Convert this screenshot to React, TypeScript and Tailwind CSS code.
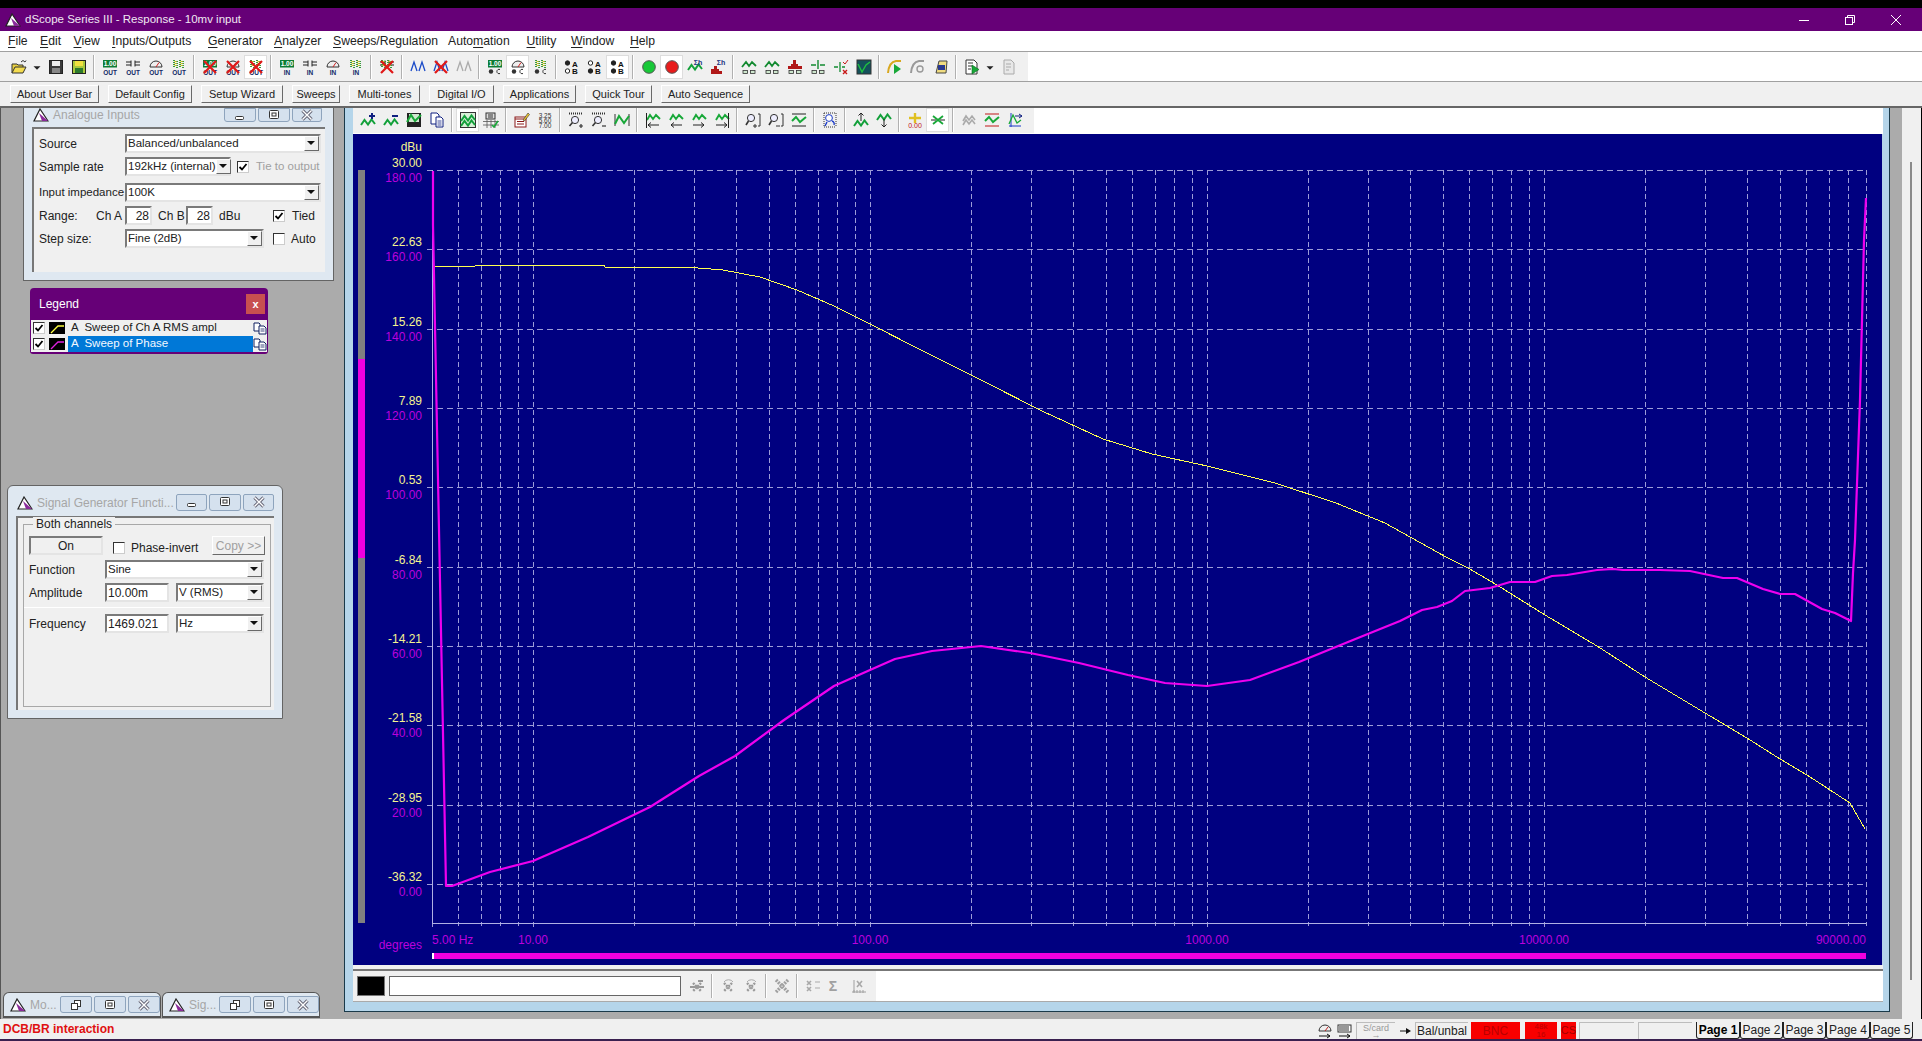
import React from "react";

const XF = (f: number) => 533 + 337 * Math.log10(f / 10);
const FREQS = [
  5, 6, 7, 8, 9, 10, 20, 30, 40, 50, 60, 70, 80, 90, 100, 200, 300, 400, 500, 600, 700, 800, 900, 1000, 2000, 3000,
  4000, 5000, 6000, 7000, 8000, 9000, 10000, 20000, 30000, 40000, 50000, 60000, 70000, 80000, 90000,
];
const DBU = ["30.00", "22.63", "15.26", "7.89", "0.53", "-6.84", "-14.21", "-21.58", "-28.95", "-36.32"];
const DEG = ["180.00", "160.00", "140.00", "120.00", "100.00", "80.00", "60.00", "40.00", "20.00", "0.00"];

const YELLOW =
  "435,266 475,266 476,265 604,265 605,267 686,267 723,270 760,277 797,290 834,306 870,324 919,349 981,380 1042,411 1103,439 1152,454 1207,466 1275,483 1336,503 1385,523 1446,557 1468,568 1497,585 1545,615 1597,646 1645,677 1705,713 1747,738 1780,759 1807,775 1850,803 1865,829";
const MAGENTA =
  "433,171 433,225 446,886 452,886 490,872 533,861 588,837 650,807 699,776 735,756 784,720 834,686 870,670 895,659 932,651 981,646 1030,653 1079,663 1128,675 1165,683 1207,686 1250,680 1299,662 1348,642 1400,621 1422,610 1437,607 1452,601 1465,591 1490,588 1510,582 1535,582 1552,576 1567,575 1597,570 1613,569 1623,570 1660,570 1690,571 1723,578 1737,578 1763,589 1780,594 1795,594 1822,609 1835,613 1851,621 1853,573 1855,540 1860,400 1864,240 1866,198";

const Logo = () => (
  <svg width="16" height="14" viewBox="0 0 16 14" className="shrink-0">
    <path d="M7 1 L1 13 H15 Z" fill="#fff" stroke="#222" strokeWidth="1.2" />
    <path d="M6 5 L15 13 H9 Z" fill="#8a2a9a" />
  </svg>
);

const wave = (c = "#12a03a") => <path d="M1 11 L4.5 6 L8 10.5 L11.5 5.5 L15 10" fill="none" stroke={c} strokeWidth="2" />;
const redX = <path d="M2 2 L14 14 M14 2 L2 14" stroke="#e01818" strokeWidth="2.2" />;
const grayX = <path d="M4 5 L12 13 M12 5 L4 13" stroke="#9a9a9a" strokeWidth="2.4" strokeDasharray="2 1" />;

function meterTop(kind: string) {
  if (kind === "num")
    return (
      <>
        <rect x="1" y="1" width="14" height="7.5" fill="#0c7c34" />
        <text x="8" y="7" textAnchor="middle" fill="#fff" className="text-[6.5px] font-bold">
          1.00
        </text>
      </>
    );
  if (kind === "filter") return <path d="M1 3h5M1 6h5M10 3h5M10 6h5M6 1.5v6M10 1.5v6" stroke="#222" fill="none" />;
  if (kind === "gauge")
    return (
      <>
        <path d="M2 8 A6 6 0 0 1 14 8 Z" fill="#eee" stroke="#333" />
        <path d="M8 8 L11 3.5" stroke="#d02020" />
      </>
    );
  return (
    <>
      <path d="M3 1v8M6 2v7M9 1v8M12 2v7" stroke="#3a9a3a" strokeWidth="2" strokeDasharray="1 1" />
      <path d="M4.5 2v6M10.5 2v6" stroke="#d8c820" strokeWidth="2" strokeDasharray="1 1" />
    </>
  );
}

const dots = (
  <>
    <circle cx="4" cy="12.5" r="2.2" fill="#333" />
    <path d="M13 10.5 A2.2 2.2 0 1 0 13 14.5" fill="none" stroke="#333" />
  </>
);

function abGlyph(a: boolean, b: boolean) {
  return (
    <>
      <circle cx="3.5" cy="4" r="2.2" fill={a ? "#222" : "#fff"} stroke="#222" />
      <circle cx="3.5" cy="12" r="2.2" fill={b ? "#222" : "#fff"} stroke="#222" />
      <text x="11" y="7.5" textAnchor="middle" fill="#111" className="text-[8px] font-bold">
        A
      </text>
      <text x="11" y="15" textAnchor="middle" fill="#111" className="text-[8px] font-bold">
        B
      </text>
    </>
  );
}

const boxes = (
  <>
    <rect x="2" y="11.5" width="4.5" height="3" fill="#cfe8cf" stroke="#333" strokeWidth=".8" />
    <rect x="9.5" y="11.5" width="4.5" height="3" fill="#cfe8cf" stroke="#333" strokeWidth=".8" />
  </>
);

const zoomLens = (
  <>
    <path d="M1 1.5h14" stroke="#333" strokeDasharray="1 1" strokeWidth="2" />
    <circle cx="7" cy="8" r="3.6" fill="#eef" stroke="#333" />
    <path d="M4.5 10.5 L1.5 14" stroke="#333" strokeWidth="1.6" />
  </>
);

const grayDoc = (
  <>
    <path d="M3 1h7l3 3v11H3z" fill="#e8e8e8" stroke="#aaa" />
    <path d="M5 5h5M5 8h5M5 11h3" stroke="#aaa" />
  </>
);

function glyph(k: string) {
  const [a, b] = k.split("-");
  switch (a) {
    case "open":
      return (
        <>
          <path d="M1 14V5h5l1 1h5v3" fill="#e8d040" stroke="#333" />
          <path d="M1 14 L4 8 H15 L12 14 Z" fill="#f4dc50" stroke="#333" />
          <path d="M10 3 Q12 0 14 3 L15 1.5" fill="none" stroke="#333" />
        </>
      );
    case "drop":
      return <path d="M4 7 H12 L8 11 Z" fill="#222" />;
    case "save":
      return (
        <>
          <rect x="1.5" y="1.5" width="13" height="13" fill={b ? "#a8c83c" : "#3a3a3a"} stroke="#222" />
          <rect x="4" y="2" width="8" height="5" fill={b ? "#f0e040" : "#eee"} />
          <rect x="4" y="9" width="8" height="5" fill={b ? "#2c7a2c" : "#888"} />
        </>
      );
    case "out":
    case "xout":
      return (
        <>
          {meterTop(b)}
          <text x="8" y="15.5" textAnchor="middle" fill="#102a66" className="text-[6.5px] font-bold">
            OUT
          </text>
          {a === "xout" && redX}
        </>
      );
    case "in":
      return (
        <>
          {meterTop(b)}
          <text x="8" y="15.5" textAnchor="middle" fill="#102a66" className="text-[6.5px] font-bold">
            IN
          </text>
        </>
      );
    case "cs":
      return (
        <>
          {meterTop(b)}
          {dots}
        </>
      );
    case "x":
      return (
        <>
          {meterTop("filter")}
          {meterTop("multi")}
          {redX}
        </>
      );
    case "blue":
      return (
        <>
          <path d="M1 12 L4 3 L7 12 M9 12 L12 3 L15 12" fill="none" stroke={b === "gray" ? "#aaa" : "#1a4ac8"} strokeWidth="1.3" />
          {b === "x" && redX}
        </>
      );
    case "ab":
      return abGlyph(b[0] === "1", b[1] === "1");
    case "led":
      return <circle cx="8" cy="8" r="6.3" fill={b === "g" ? "#18c838" : "#e81c1c"} stroke="#555" />;
    case "sig":
      return (
        <>
          {b === "w" ? wave() : <path d="M1 15V10h3V7h3v3h2v2h3v3z" fill="#b01818" />}
          <text x="11" y="6" textAnchor="middle" fill="#203080" className="text-[7px] font-bold">
            Σh
          </text>
        </>
      );
    case "wb":
      return (
        <>
          {b === "w" && <path d="M1 8 L5 3 L8 7 L11 3 L15 7" fill="none" stroke="#128a30" strokeWidth="1.8" />}
          {b === "r" && <path d="M1 10V7h3V5h2V1h3v4h2v2h4v3z" fill="#b01818" />}
          {b === "i" && <path d="M1 6h5M8 1v9M10 6h5" stroke="#128a30" strokeWidth="1.4" />}
          {boxes}
        </>
      );
    case "chk":
      return (
        <>
          <path d="M1 8h4M7 3v10M9 8h3" stroke="#128a30" strokeWidth="1.3" />
          <path d="M10 3l2 2 3-4" stroke="#c81818" fill="none" />
          <path d="M10 11l4 4M14 11l-4 4" stroke="#c81818" strokeWidth="1.4" />
        </>
      );
    case "scr":
      return (
        <>
          <rect x="1" y="1" width="14" height="14" fill="#14505a" stroke="#333" />
          <path d="M2 5 L6 13 L10 6 L14 3" fill="none" stroke="#20c040" strokeWidth="1.4" />
        </>
      );
    case "curve":
      return (
        <>
          <path d="M1 14 Q2 3 9 2 H14" fill="none" stroke={b === "g" ? "#999" : "#d8a820"} strokeWidth="2" />
          {b === "g" ? (
            <circle cx="10" cy="10" r="3" fill="none" stroke="#999" strokeWidth="1.4" />
          ) : (
            <path d="M7 5 L14 10 L7 15 Z" fill="#18a838" />
          )}
        </>
      );
    case "note":
      return (
        <>
          <path d="M3 14 L6 2 H14 L13 14 Z" fill="#f0dc80" stroke="#444" />
          <rect x="5" y="6" width="7" height="5" fill="#2a3a90" />
        </>
      );
    case "doc":
      return (
        <>
          <path d="M2 1h8l3 3v11H2z" fill="#fff" stroke="#333" />
          <path d="M4 4h5M4 7h4M4 10h3" stroke="#333" />
          <path d="M8 6 L15 10.5 L8 15 Z" fill="#18a838" stroke="#0a6a20" strokeWidth=".6" />
        </>
      );
    case "gdoc":
      return grayDoc;
    case "plus":
    case "minus":
      return (
        <>
          <g transform="translate(0 2)">{wave()}</g>
          <path d={a === "plus" ? "M9 4h6M12 1v6" : "M9 4h6"} stroke="#102080" strokeWidth="2" />
        </>
      );
    case "savec":
      return (
        <>
          <rect x="1" y="1" width="14" height="14" fill="#222" />
          <rect x="3" y="2" width="10" height="8" fill="#cfe8cf" />
          <path d="M1 10 L5 3 L9 9 L15 3" fill="none" stroke="#18a838" strokeWidth="2" />
        </>
      );
    case "copy":
      return (
        <>
          <path d="M2 1h6l2 2v9H2z" fill="#fff" stroke="#102080" />
          <path d="M7 5h5l2 2v8H7z" fill="#fff" stroke="#102080" />
          <path d="M8.5 9h4M8.5 11h4M8.5 13h4" stroke="#102080" strokeWidth=".8" />
        </>
      );
    case "chart":
      return (
        <>
          <rect x="0.5" y="0.5" width="15" height="15" fill="#d8f0d8" stroke="#333" />
          <g transform="translate(0 -2)">{wave()}</g>
          <g transform="translate(0 3)">{wave()}</g>
        </>
      );
    case "print":
      return (
        <>
          <rect x="3" y="1" width="9" height="6" fill="#ddd" stroke="#333" />
          <path d="M5 3h5M5 5h5" stroke="#333" />
          <path d="M0 9.5h16M0 13h16M4 8v8M8 8v8M12 8v8" stroke="#555" strokeWidth=".8" />
          <path d="M9 13 L11 15 L15 9" stroke="#18a838" fill="none" strokeWidth="1.6" />
        </>
      );
    case "cal":
      return (
        <>
          <rect x="1" y="5" width="11" height="10" fill="#fff" stroke="#8a1818" />
          <path d="M1 7h11M3 9.5h7M3 12h7" stroke="#8a1818" />
          <path d="M9 8 L14 1 L15.5 2.5 L10.5 9 Z" fill="#e8c030" stroke="#333" strokeWidth=".6" />
        </>
      );
    case "nums":
      return (
        <text x="8" y="6" textAnchor="middle" fill="#333" className="text-[6.5px]">
          <tspan x="8">3.25</tspan>
          <tspan x="8" dy="5">5.60</tspan>
          <tspan x="8" dy="5">7.00</tspan>
        </text>
      );
    case "zp":
    case "zm":
      return (
        <>
          {zoomLens}
          <path d={a === "zp" ? "M11 14h4M13 12v4" : "M11 14h4"} stroke="#333" strokeWidth="1.2" />
        </>
      );
    case "gbar":
      return (
        <>
          <path d="M1 2v12M15 2v12" stroke="#333" />
          <path d="M1 12 L5 4 L10 11 L15 4" fill="none" stroke="#18a838" strokeWidth="2" />
        </>
      );
    case "wl":
    case "wr":
      return (
        <>
          <path d="M2 8 L5 3 L8 7 L11 3 L15 7" fill="none" stroke="#18a838" strokeWidth="1.9" />
          <path d={a === "wl" ? "M14 13H3M6 10.5 L3 13 L6 15.5" : "M2 13H13M10 10.5 L13 13 L10 15.5"} fill="none" stroke="#222" />
          {b === "e" && <path d={a === "wl" ? "M1.5 1v15" : "M14.5 1v15"} stroke="#222" />}
        </>
      );
    case "zx":
      return (
        <>
          <circle cx="6" cy="6" r="3.6" fill="#eef" stroke="#333" />
          <path d="M3.5 9 L1 13" stroke="#333" strokeWidth="1.6" />
          <path d={b === "p" ? "M8 14h4M10 12v4" : "M8 14h4"} stroke="#333" />
          <path d="M13 2h2v12h-2" fill="none" stroke="#333" />
        </>
      );
    case "wbar":
      return (
        <>
          <path d="M1 2h14M1 14h14" stroke="#222" />
          <path d="M1 9 L5 5 L9 10 L15 5" fill="none" stroke="#18a838" strokeWidth="2" />
        </>
      );
    case "zr":
      return (
        <>
          <path d="M2 1h12M2 15h12M2 1v14M14 1v14" stroke="#333" strokeDasharray="1 1" />
          <circle cx="7" cy="6" r="3.4" fill="#fff" stroke="#1a3ac8" />
          <path d="M5 10 L3 14 M10 9 A3 3 0 0 1 12 13" stroke="#1a3ac8" fill="none" strokeWidth="1.4" />
        </>
      );
    case "up":
    case "dn":
      return (
        <>
          <g transform={a === "up" ? "translate(0 3)" : "translate(0 -3)"}>{wave()}</g>
          <path d={a === "up" ? "M8 9V1M5.5 3.5 L8 1 L10.5 3.5" : "M8 7V15M5.5 12.5 L8 15 L10.5 12.5"} fill="none" stroke="#222" />
        </>
      );
    case "cross":
      return (
        <>
          <path d="M8 1v10M2 6h12" stroke="#e0c020" strokeWidth="2.4" />
          <text x="8" y="15.5" textAnchor="middle" fill="#c01818" className="text-[7px]">
            0.00
          </text>
        </>
      );
    case "xarr":
      return (
        <>
          <path d="M3 4 L13 12 M13 4 L3 12" stroke="#18a838" strokeWidth="1.8" />
          <path d="M1 8h5M15 8h-5" stroke="#222" strokeWidth="1.2" />
        </>
      );
    case "gw":
      return <path d="M2 9 L5 4 L8 8 L11 4 L14 8 M2 13 L5 8 L8 12 L11 8 L14 12" fill="none" stroke="#aaa" strokeWidth="1.6" />;
    case "rw":
      return (
        <>
          <path d="M1 2h14M1 14h14" stroke="#c01818" />
          <path d="M1 9 L5 5 L9 10 L15 5" fill="none" stroke="#18a838" strokeWidth="2" />
        </>
      );
    case "bc":
      return (
        <>
          <path d="M4 1v14M2 14h12" stroke="#1a3ac8" />
          <path d="M2 12 L6 3 L10 11 L14 8" stroke="#18a838" fill="none" strokeWidth="1.3" />
          <path d="M8 4h7M12 2 L15 4 L12 6" stroke="#102080" fill="none" />
        </>
      );
    case "g1":
      return (
        <>
          <path d="M9 3h5" stroke="#999" strokeWidth="2" />
          <path d="M1 9h14" stroke="#999" strokeWidth="2" />
          {grayX}
        </>
      );
    case "g2":
      return (
        <>
          <path d="M4 4 A5 4 0 0 1 13 4" fill="none" stroke="#aaa" />
          {grayX}
        </>
      );
    case "g3":
      return <path d="M2 2 L14 14 M14 2 L2 14" stroke="#a0a0a0" strokeWidth="3.4" strokeDasharray="2 1" />;
    case "g4":
      return (
        <>
          <path d="M2 3 L6 7 M6 3 L2 7 M2 9 L6 13 M6 9 L2 13" stroke="#a8a8a8" strokeWidth="1.6" />
          <path d="M10 4h5M10 10h5" stroke="#aaa" />
        </>
      );
    case "g5":
      return (
        <text x="5" y="13" textAnchor="middle" fill="#a0a0a0" className="text-[14px] font-bold">
          Σ
        </text>
      );
    case "g6":
      return (
        <>
          <path d="M1 14h14M3 12v3M6 12v3M9 12v3M12 12v3M3 2v12" stroke="#a0a0a0" />
          <path d="M6 3 L11 9 M11 3 L6 9" stroke="#a8a8a8" strokeWidth="1.6" />
        </>
      );
  }
  return null;
}

function Tool({ k, on, wide = "w-[23px]" }: { k: string; on?: boolean; wide?: string }) {
  return (
    <div className={`${wide} h-[24px] shrink-0 flex items-center justify-center ${on ? "bg-white border border-[#dddddd]" : ""}`}>
      <svg width="16" height="16" viewBox="0 0 16 16" className="font-['Liberation_Sans',sans-serif]">
        {glyph(k)}
      </svg>
    </div>
  );
}

const Sep = () => (
  <div className="w-[8px] h-[24px] shrink-0 flex justify-center">
    <div className="w-[2px] h-full border-l border-[#b0b0b0] border-r-white border-r" />
  </div>
);

function Strip({ items }: { items: string[] }) {
  return (
    <>
      {items.map((s, i) => {
        if (s === "|") return <Sep key={i} />;
        const on = s.endsWith("*");
        const k = on ? s.slice(0, -1) : s;
        return <Tool key={i} k={k} on={on} wide={k === "drop" ? "w-[14px]" : "w-[23px]"} />;
      })}
    </>
  );
}

const MAIN_TOOLS = [
  "open", "drop", "save", "save-a", "|",
  "out-num", "out-filter", "out-gauge", "out-multi", "|",
  "xout-num", "xout-gauge", "xout-multi*", "|",
  "in-num", "in-filter", "in-gauge", "in-multi", "|",
  "x", "|",
  "blue", "blue-x", "blue-gray", "|",
  "cs-num", "cs-gauge*", "cs-multi", "|",
  "ab-10", "ab-01", "ab-11*", "|",
  "led-g", "led-r*", "sig-w", "sig-r", "|",
  "wb-w", "wb-w", "wb-r", "wb-i", "chk", "scr", "|",
  "curve", "curve-g", "note", "|",
  "doc", "drop", "gdoc",
];

const PLOT_TOOLS = [
  "plus", "minus", "savec", "copy", "|",
  "chart*", "print", "|",
  "cal", "nums", "|",
  "zp", "zm", "gbar", "|",
  "wl-e", "wl", "wr", "wr-e", "|",
  "zx-p", "zx-m", "wbar", "|",
  "zr", "|",
  "up", "dn", "|",
  "cross", "xarr*", "|",
  "gw", "rw", "bc",
];

const MENUS: [string, string, string, string][] = [
  ["", "F", "ile", "w-[32px]"],
  ["", "E", "dit", "w-[33.5px]"],
  ["", "V", "iew", "w-[38.5px]"],
  ["", "I", "nputs/Outputs", "w-[96px]"],
  ["", "G", "enerator", "w-[66px]"],
  ["", "A", "nalyzer", "w-[59px]"],
  ["", "S", "weeps/Regulation", "w-[115px]"],
  ["Auto", "m", "ation", "w-[78.5px]"],
  ["", "U", "tility", "w-[44.5px]"],
  ["", "W", "indow", "w-[59px]"],
  ["", "H", "elp", "w-[40px]"],
];

const BTNS: [string, string][] = [
  ["About User Bar", "w-[98px]"],
  ["Default Config", "w-[93px]"],
  ["Setup Wizard", "w-[91px]"],
  ["Sweeps", "w-[57px]"],
  ["Multi-tones", "w-[80px]"],
  ["Digital I/O", "w-[74px]"],
  ["Applications", "w-[82px]"],
  ["Quick Tour", "w-[76px]"],
  ["Auto Sequence", "w-[98px]"],
];

const bevel = "border border-t-white border-l-white border-r-[#696969] border-b-[#696969]";
const sunken = "border-2 border-t-[#7a7a7a] border-l-[#7a7a7a] border-r-[#e4e4e4] border-b-[#e4e4e4] bg-white";

function Check({ on }: { on?: boolean }) {
  return (
    <div className="w-[12px] h-[12px] shrink-0 bg-white border border-t-[#333] border-l-[#333] border-r-[#ccc] border-b-[#ccc] flex items-center justify-center">
      {on && (
        <svg width="10" height="10" viewBox="0 0 10 10">
          <path d="M1.5 5 L4 7.5 L8.5 2" fill="none" stroke="#000" strokeWidth="1.8" />
        </svg>
      )}
    </div>
  );
}

function Select({ value, cls }: { value: string; cls: string }) {
  return (
    <div className={`${cls} ${sunken} h-[19px] shrink-0 flex items-center justify-between`}>
      <span className="pl-[1px] text-[#222] text-[11.5px] leading-none whitespace-nowrap">{value}</span>
      <div className={`w-[15px] h-[15px] shrink-0 bg-[#f0f0f0] ${bevel} flex items-center justify-center`}>
        <svg width="9" height="5" viewBox="0 0 9 5">
          <path d="M0 0h8L4 4z" fill="#111" />
        </svg>
      </div>
    </div>
  );
}

function Input({ value, cls, right }: { value: string; cls: string; right?: boolean }) {
  return (
    <div className={`${cls} ${sunken} h-[19px] shrink-0 flex items-center ${right ? "justify-end pr-[1px]" : "pl-[1px]"} text-[#222] leading-none`}>
      {value}
    </div>
  );
}

function WinBtn({ kind, cls }: { kind: string; cls: string }) {
  return (
    <div className={`${cls} shrink-0 rounded-b-[3px] border border-[#8ea4bd] bg-[#d5e1ee] flex items-center justify-center`}>
      <svg width="16" height="12" viewBox="0 0 16 12">
        {kind === "min" && <rect x="3.5" y="7.5" width="8" height="3" rx="1" fill="#fff" stroke="#333" />}
        {kind === "max" && (
          <>
            <rect x="3.5" y="1.5" width="9" height="8" rx="1" fill="#fff" stroke="#333" />
            <rect x="6" y="4" width="4" height="3" fill="#fff" stroke="#333" />
          </>
        )}
        {kind === "res" && (
          <>
            <rect x="6.5" y="1.5" width="6" height="6" fill="#fff" stroke="#333" />
            <rect x="3.5" y="4.5" width="6" height="6" fill="#fff" stroke="#333" />
          </>
        )}
        {kind === "x" && (
          <>
            <path d="M3.5 1.5 L12.5 10.5 M12.5 1.5 L3.5 10.5" stroke="#667" strokeWidth="3.2" />
            <path d="M3.5 1.5 L12.5 10.5 M12.5 1.5 L3.5 10.5" stroke="#fff" strokeWidth="1.4" />
          </>
        )}
      </svg>
    </div>
  );
}

function AnalogueInputs() {
  return (
    <div className="absolute left-[22px] top-0 w-[311px] h-[173px] bg-[#dfe8f1] border-x border-b border-[#646464] px-[8px] flex flex-col">
      <div className="h-[19px] shrink-0 flex items-start">
        <div className="pr-[4px] pl-[1px]"><Logo /></div>
        <span className="text-[#a6a6a6] text-[12px] leading-[14px] flex-1">Analogue Inputs</span>
        <div className="flex gap-[2px] pr-[3px]">
          <WinBtn kind="min" cls="w-[32px] h-[14px]" />
          <WinBtn kind="max" cls="w-[32px] h-[14px]" />
          <WinBtn kind="x" cls="w-[30px] h-[14px]" />
        </div>
      </div>
      <div className="h-[145px] bg-[#f0f0f0] border-t-2 border-l-2 border-[#777777] pl-[5px] pt-[5px] flex flex-col">
        <div className="flex items-center h-[19px]">
          <span className="w-[86px]">Source</span>
          <Select value="Balanced/unbalanced" cls="w-[196px]" />
        </div>
        <div className="flex items-center h-[19px] mt-[4px]">
          <span className="w-[86px]">Sample rate</span>
          <Select value="192kHz (internal)" cls="w-[106px]" />
          <div className="ml-[6px]"><Check on /></div>
          <span className="ml-[7px] text-[#a0a0a0] text-[11.5px] whitespace-nowrap">Tie to output</span>
        </div>
        <div className="flex items-center h-[19px] mt-[7px]">
          <span className="w-[86px] whitespace-nowrap text-[11.5px]">Input impedance</span>
          <Select value="100K" cls="w-[196px]" />
        </div>
        <div className="flex items-center h-[19px] mt-[4px]">
          <span className="w-[57px]">Range:</span>
          <span className="w-[29px]">Ch A</span>
          <Input value="28" cls="w-[27px]" right />
          <span className="w-[34px] pl-[6px] whitespace-nowrap">Ch B</span>
          <Input value="28" cls="w-[27px]" right />
          <span className="w-[60px] pl-[6px]">dBu</span>
          <Check on />
          <span className="ml-[7px]">Tied</span>
        </div>
        <div className="flex items-center h-[19px] mt-[4px]">
          <span className="w-[86px]">Step size:</span>
          <Select value="Fine (2dB)" cls="w-[139px]" />
          <div className="ml-[9px]"><Check /></div>
          <span className="ml-[6px]">Auto</span>
        </div>
      </div>
    </div>
  );
}

function LegendRow({ label, color, selected }: { label: string; color: string; selected?: boolean }) {
  return (
    <div className="h-[16px] flex items-center bg-[#f0f0f0]">
      <div className="ml-[2px]"><Check on /></div>
      <svg width="16" height="12" viewBox="0 0 16 12" className="ml-[4px] shrink-0">
        <rect width="16" height="12" fill="#000" />
        <path d="M2 11 L9 4 H15" fill="none" stroke={color} strokeWidth="1.3" />
      </svg>
      <div className={`ml-[3px] flex-1 h-full flex items-center pl-[3px] text-[11.5px] ${selected ? "bg-[#0078d7] text-[#f4f8ff]" : "text-[#222]"}`}>
        <span className="whitespace-pre">{label}</span>
      </div>
      <svg width="14" height="13" viewBox="0 0 14 13" className="shrink-0">
        <path d="M1 1h5l1 1v7H1z" fill="#fff" stroke="#102060" />
        <path d="M6 4h5l2 2v6H6z" fill="#fff" stroke="#102060" />
        <path d="M7.5 7h4M7.5 9h4" stroke="#102060" strokeWidth=".8" />
      </svg>
    </div>
  );
}

function LegendBox() {
  return (
    <div className="absolute left-[29px] top-[180px] w-[238px] h-[66px] bg-[#660077] rounded-t-[4px] rounded-b-[3px] px-[1px] pb-[1px] flex flex-col">
      <div className="h-[32px] flex items-center justify-between pl-[8px] pr-[2px]">
        <span className="text-white text-[12px]">Legend</span>
        <div className="w-[19px] h-[20px] bg-[#c75050] flex items-center justify-center text-white text-[11px] font-bold leading-none">x</div>
      </div>
      <LegendRow label="A  Sweep of Ch A RMS ampl" color="#ffff40" />
      <LegendRow label="A  Sweep of Phase" color="#e020e0" selected />
    </div>
  );
}

function SignalGen() {
  return (
    <div className="absolute left-[6px] top-[377px] w-[276px] h-[234px] rounded-t-[6px] bg-[#dfe8f1] border-x border-b border-t border-[#646464] px-[8px] flex flex-col">
      <div className="h-[30px] shrink-0 flex items-center">
        <div className="pl-[1px] pr-[4px] pt-[3px]"><Logo /></div>
        <span className="text-[#a6a6a6] text-[12px] pt-[3px] flex-1 whitespace-nowrap">Signal Generator Functi...</span>
        <div className="flex gap-[2px] pt-[2px]">
          <WinBtn kind="min" cls="w-[31px] h-[17px] rounded-t-[2px]" />
          <WinBtn kind="max" cls="w-[32px] h-[17px] rounded-t-[2px]" />
          <WinBtn kind="x" cls="w-[31px] h-[17px] rounded-t-[2px]" />
        </div>
      </div>
      <div className="h-[194px] bg-[#f0f0f0] border-t-2 border-l-2 border-[#777777] pl-[5px] pt-[6px] pr-[3px]">
        <div className="relative h-[183px] border border-[#a8a8a8] px-[5px] pt-[11px]">
          <span className="absolute left-[9px] top-[-8px] bg-[#f0f0f0] px-[3px] leading-[14px]">Both channels</span>
          <div className="flex items-center h-[19px]">
            <div className="w-[74px] h-[19px] border-2 border-t-[#7a7a7a] border-l-[#7a7a7a] border-r-[#e4e4e4] border-b-[#e4e4e4] flex items-center justify-center">On</div>
            <div className="ml-[10px] mt-[4px]"><Check /></div>
            <span className="ml-[6px] mt-[4px] w-[81px]">Phase-invert</span>
            <div className={`w-[53px] h-[19px] ${bevel} text-[#a0a0a0] flex items-center justify-center`}>Copy &gt;&gt;</div>
          </div>
          <div className="flex items-center h-[19px] mt-[5px]">
            <span className="w-[76px] whitespace-nowrap">Function</span>
            <Select value="Sine" cls="w-[159px]" />
          </div>
          <div className="flex items-center h-[19px] mt-[4px]">
            <span className="w-[76px]">Amplitude</span>
            <Input value="10.00m" cls="w-[64px]" />
            <div className="ml-[7px]"><Select value="V (RMS)" cls="w-[88px]" /></div>
          </div>
          <div className="h-px bg-[#a8a8a8] -mx-[5px] mt-[5px] mb-[6px] border-b border-white" />
          <div className="flex items-center h-[19px]">
            <span className="w-[76px]">Frequency</span>
            <Input value="1469.021" cls="w-[64px]" />
            <div className="ml-[7px]"><Select value="Hz" cls="w-[88px]" /></div>
          </div>
        </div>
      </div>
    </div>
  );
}

function MiniWin({ label, cls }: { label: string; cls: string }) {
  return (
    <div className={`absolute ${cls} bottom-[1px] w-[158px] h-[26px] rounded-t-[6px] bg-[#dfe8f1] border border-b-2 border-[#555555] flex items-center pl-[6px] gap-[2px]`}>
      <Logo />
      <span className="text-[#a6a6a6] w-[31px] ml-[2px]">{label}</span>
      <WinBtn kind="res" cls="w-[32px] h-[17px] rounded-t-[2px]" />
      <WinBtn kind="max" cls="w-[32px] h-[17px] rounded-t-[2px]" />
      <WinBtn kind="x" cls="w-[32px] h-[17px] rounded-t-[2px]" />
    </div>
  );
}

function Chart() {
  const rows = DBU.map((_, i) => 170 + i * 79.33);
  const grid = "#9c9cd8";
  return (
    <svg width="1529" height="831" viewBox="353 134 1529 831" className="block shrink-0 bg-[#000080] text-[12px] font-['Liberation_Sans',sans-serif]">
      <rect x="358" y="170" width="7" height="753" fill="#808080" />
      <rect x="358" y="359" width="7" height="199" fill="#f000e0" />
      {FREQS.map((f) => (
        <line key={f} x1={Math.round(XF(f)) + 0.5} x2={Math.round(XF(f)) + 0.5} y1="170" y2={f === 5 || f === 10 || f === 100 || f === 1000 || f === 10000 ? 930 : 926} stroke={grid} strokeDasharray="5 3" />
      ))}
      {rows.map((y, i) => (
        <g key={i}>
          <line x1="427" x2="1866" y1={Math.round(y) + 0.5} y2={Math.round(y) + 0.5} stroke={grid} strokeDasharray="6 4" />
          <text x="422" y={y - 3} textAnchor="end" fill="#f4f490">
            {DBU[i]}
          </text>
          <text x="422" y={y + 12} textAnchor="end" fill="#bb00dd">
            {DEG[i]}
          </text>
        </g>
      ))}
      <text x="422" y="151" textAnchor="end" fill="#f4f490">dBu</text>
      <line x1="432.5" x2="432.5" y1="170" y2="923" stroke="#b0b0e4" />
      <line x1="432" x2="1866" y1="923.5" y2="923.5" stroke="#b0b0e4" />
      <polyline points={YELLOW} fill="none" stroke="#ffff50" strokeWidth="1" shapeRendering="crispEdges" />
      <polyline points={MAGENTA} fill="none" stroke="#ee00ee" strokeWidth="2.2" strokeLinejoin="round" />
      <text x="432" y="944" fill="#bb00dd">5.00 Hz</text>
      <text x="533" y="944" textAnchor="middle" fill="#bb00dd">10.00</text>
      <text x="870" y="944" textAnchor="middle" fill="#bb00dd">100.00</text>
      <text x="1207" y="944" textAnchor="middle" fill="#bb00dd">1000.00</text>
      <text x="1544" y="944" textAnchor="middle" fill="#bb00dd">10000.00</text>
      <text x="1866" y="944" textAnchor="end" fill="#bb00dd">90000.00</text>
      <text x="422" y="949" textAnchor="end" fill="#bb00dd">degrees</text>
      <rect x="432" y="953" width="1434" height="6" fill="#f000e0" />
      <rect x="432" y="953" width="2" height="6" fill="#ffffff" />
    </svg>
  );
}

function PlotWindow() {
  return (
    <div className="w-[1546px] h-[904px] shrink-0 bg-[#b5d5ea] border-x border-b border-[#1a3a4a] pl-[8px] pr-[6px] flex flex-col">
      <div className="h-[26px] bg-white shrink-0 flex">
        <div className="w-[681px] h-[25px] bg-[#f0f0f0] flex items-start pl-[3px]">
          <Strip items={PLOT_TOOLS} />
        </div>
      </div>
      <Chart />
      <div className="h-[6px] shrink-0 bg-[#f0f0f0] border-b-2 border-[#777777]" />
      <div className="h-[31px] shrink-0 bg-white border-b border-[#aaaaaa] flex">
        <div className="w-[523px] bg-[#f0f0f0] flex items-center pl-[4px]">
          <div className="w-[28px] h-[20px] bg-black border border-[#777777]" />
          <div className="w-[292px] h-[20px] ml-[4px] bg-white border border-[#666666]" />
          <div className="ml-[4px] flex items-center">
            <Tool k="g1" wide="w-[23px]" />
            <Sep />
            <Tool k="g2" />
            <Tool k="g2" />
            <Sep />
            <Tool k="g3" />
            <Sep />
            <Tool k="g4" />
            <Tool k="g5" />
            <Tool k="g6" />
          </div>
        </div>
      </div>
      <div className="flex-1 bg-[#b5d5ea]" />
    </div>
  );
}

function PageTab({ label, cls, bold }: { label: string; cls: string; bold?: boolean }) {
  return (
    <div className={`${cls} h-[17px] shrink-0 border-x border-b border-[#222222] rounded-b-[3px] flex items-center justify-center text-[12px] leading-none text-[#222] ${bold ? "font-bold text-black" : ""}`}>
      {label}
    </div>
  );
}

function StatusBar() {
  const cell = "h-[17px] shrink-0 border-t border-l border-[#bdbdbd]";
  return (
    <div className="h-[22px] shrink-0 bg-[#f0f0f0] border-b-2 border-[#3a2050] flex items-end pl-[3px] pr-[6px] text-[12px]">
      <span className="text-[#e01010] font-bold w-[1314px] self-center">DCB/BR interaction</span>
      <div className="flex items-end">
        <svg width="16" height="17" viewBox="0 0 16 17" className="shrink-0">
          <path d="M2 9 A6 6 0 0 1 14 9 Z" fill="#eee" stroke="#333" />
          <path d="M8 9 L11 5" stroke="#c02020" />
          <path d="M2 14h11M10 12 L13 14 L10 16" stroke="#111" fill="none" />
        </svg>
        <svg width="16" height="17" viewBox="0 0 16 17" className="ml-[4px] shrink-0">
          <rect x="1" y="3" width="13" height="7" fill="#fff" stroke="#333" />
          <path d="M3 4v5M5 4v5M7 4v5M9 4v5M11 4v5" stroke="#333" />
          <path d="M2 14h11M10 12 L13 14 L10 16" stroke="#111" fill="none" />
        </svg>
        <div className={`${cell} w-[39px] ml-[3px] text-[#999] text-[9px] leading-[10px] text-center`}>
          S/card
          <div className="leading-[5px]">→</div>
        </div>
        <svg width="14" height="17" viewBox="0 0 14 17" className="ml-[4px] shrink-0">
          <path d="M1 8.5h6V6l5 3-5 3V9.5H1z" fill="#111" />
        </svg>
        <div className={`${cell} w-[53px] ml-[2px] flex items-center justify-center text-[#222] leading-none whitespace-nowrap`}>Bal/unbal</div>
        <div className="h-[17px] w-[49px] ml-[3px] bg-[#f80000] text-[#b80000] text-[12px] flex items-center justify-center">BNC</div>
        <div className="h-[17px] w-[32px] ml-[5px] bg-[#f80000] text-[#b80000] text-[8px] leading-[8px] flex flex-col items-center justify-center">
          <span>48k</span>
          <span>16</span>
        </div>
        <div className="h-[17px] w-[15px] ml-[4px] bg-[#f80000] text-[#a00000] text-[11px] flex items-center justify-center">CS</div>
        <div className={`${cell} w-[55px] ml-[3px]`} />
        <div className={`${cell} w-[54px] ml-[4px]`} />
        <div className="flex ml-[4px]">
          <PageTab label="Page 1" cls="w-[44px]" bold />
          <PageTab label="Page 2" cls="w-[43px]" />
          <PageTab label="Page 3" cls="w-[43px]" />
          <PageTab label="Page 4" cls="w-[44px]" />
          <PageTab label="Page 5" cls="w-[43px]" />
        </div>
      </div>
    </div>
  );
}

export default function App() {
  return (
    <div className="w-[1922px] h-[1041px] overflow-hidden flex flex-col bg-black font-['Liberation_Sans',sans-serif] text-[12px] text-[#222]">
      <div className="h-[8px] shrink-0 bg-black" />
      <div className="h-[23px] shrink-0 bg-[#660077] flex items-center pl-[5px] text-[#f0e8f2]">
        <Logo />
        <span className="ml-[4px] flex-1 text-[11.5px]">dScope Series III - Response - 10mv input</span>
        <div className="flex pr-[3px]">
          <div className="w-[46px] flex justify-center">
            <svg width="12" height="12" viewBox="0 0 12 12"><path d="M1 6.5h10" stroke="#fff" /></svg>
          </div>
          <div className="w-[46px] flex justify-center">
            <svg width="12" height="12" viewBox="0 0 12 12"><rect x="1.5" y="3.5" width="7" height="7" fill="none" stroke="#fff" /><path d="M3.5 3.5v-2h7v7h-2" fill="none" stroke="#fff" /></svg>
          </div>
          <div className="w-[46px] flex justify-center">
            <svg width="12" height="12" viewBox="0 0 12 12"><path d="M1 1 L11 11 M11 1 L1 11" stroke="#fff" /></svg>
          </div>
        </div>
      </div>
      <div className="h-[21px] shrink-0 bg-white border-b border-[#a0a0a0] flex items-center pl-[8px] text-[12.2px]">
        {MENUS.map(([pre, u, rest, w]) => (
          <span key={u + rest} className={`${w} shrink-0 whitespace-nowrap`}>
            {pre}
            <span className="underline underline-offset-2">{u}</span>
            {rest}
          </span>
        ))}
      </div>
      <div className="h-[30px] shrink-0 bg-white border-b border-[#a0a0a0] flex">
        <div className="w-[1028px] bg-[#f0f0f0] flex items-center pl-[7px]">
          <Strip items={MAIN_TOOLS} />
        </div>
      </div>
      <div className="h-[26px] shrink-0 bg-[#f0f0f0] border-b-2 border-[#666666] flex items-center pl-[10px]">
        {BTNS.map(([t, w]) => (
          <div key={t} className={`${w} pr-[9px] shrink-0`}>
            <div className={`h-[18px] ${bevel} flex items-center justify-center whitespace-nowrap text-[11px] text-[#222]`}>{t}</div>
          </div>
        ))}
      </div>
      <div className="flex-1 min-h-0 flex bg-[#ababab] border-l border-[#555555]">
        <div className="relative w-[343px] shrink-0">
          <AnalogueInputs />
          <LegendBox />
          <SignalGen />
          <MiniWin label="Mo..." cls="left-[2px]" />
          <MiniWin label="Sig..." cls="left-[161px]" />
        </div>
        <PlotWindow />
        <div className="w-[12px] shrink-0" />
        <div className="flex-1 bg-[#f0f0f0] pl-[8px] pt-[54px] border-r border-black">
          <div className="w-[2px] h-[818px] bg-[#8a8a8a]" />
        </div>
      </div>
      <StatusBar />
    </div>
  );
}
